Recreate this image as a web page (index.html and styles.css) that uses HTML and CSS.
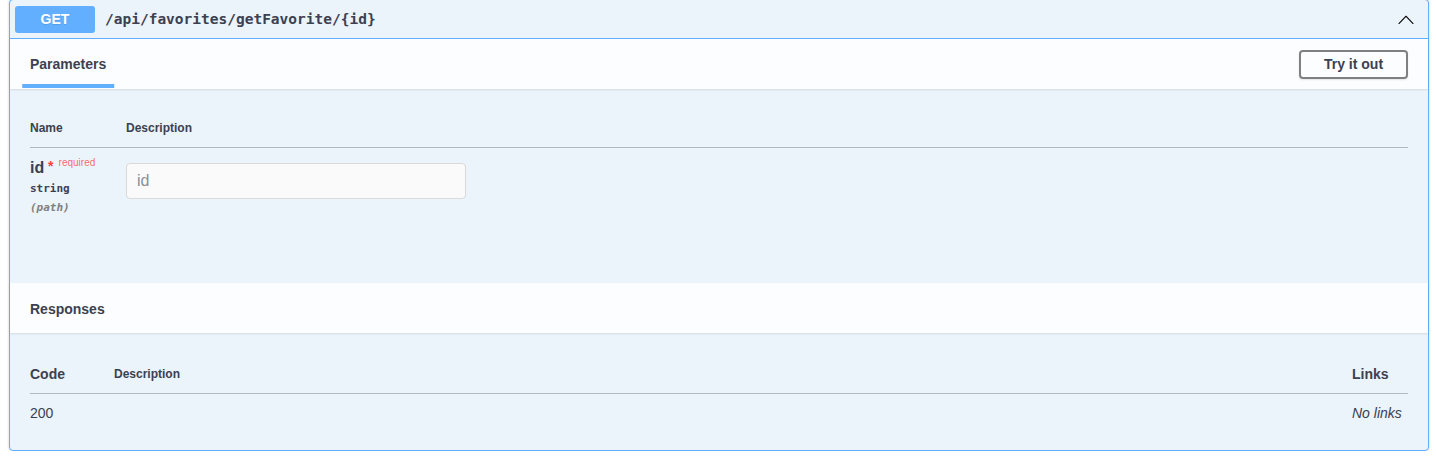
FILE: index.html
```html
<!DOCTYPE html>
<html>
<head>
<meta charset="utf-8">
<link rel="stylesheet" href="styles.css">
</head>
<body>
<div class="wrap">
  <div class="opblock">
    <div class="summary">
      <span class="method">GET</span>
      <span class="path">/api/favorites/getFavorite/{id}</span>
      <svg class="arrow" width="20" height="20" viewBox="0 0 20 20"><path d="M17.418 14.908c-.109.115-.23.115-.365.115-.134 0-.268 0-.379-.115L10 7.988l-6.674 6.92c-.208.2-.558.2-.767 0-.208-.2-.208-.555 0-.755l7.068-7.3a.513.513 0 0 1 .747 0l7.044 7.3c.209.2.209.555 0 .755z" fill="#000"/></svg>
    </div>
    <div class="section-header">
      <div class="tab"><h4><span class="tab-label">Parameters</span></h4></div>
      <button class="try">Try it out</button>
    </div>
    <div class="params">
      <table class="ptable">
        <thead>
          <tr><th class="col-name">Name</th><th>Description</th></tr>
        </thead>
        <tbody>
          <tr>
            <td class="col-name">
              <div class="pname">id<span class="star">&nbsp;*</span><span class="req">required</span></div>
              <div class="ptype">string</div>
              <div class="pin">(path)</div>
            </td>
            <td><input class="pinput" type="text" placeholder="id"></td>
          </tr>
        </tbody>
      </table>
    </div>
    <div class="section-header resp-header">
      <h4 class="resp-title">Responses</h4>
    </div>
    <div class="responses">
      <table class="rtable">
        <thead>
          <tr><th class="rcode">Code</th><th class="rdesc">Description</th><th class="rlinks">Links</th></tr>
        </thead>
        <tbody>
          <tr><td class="rcode-v">200</td><td></td><td class="nolinks">No links</td></tr>
        </tbody>
      </table>
    </div>
  </div>
</div>
</body>
</html>
```
FILE: styles.css
```css
html, body {
  margin: 0;
  padding: 0;
  background: #ffffff;
  font-family: "Liberation Sans", Arial, sans-serif;
  color: #3b4151;
}
.wrap {
  padding: 0 7px 0 9px;
}
.opblock {
  margin-top: -1px;
  border: 1px solid #61affe;
  border-radius: 4px;
  background: #ebf3fb;
  box-shadow: 0 0 3px rgba(0,0,0,.19);
  height: 452px;
  box-sizing: border-box;
}
.summary {
  display: flex;
  align-items: center;
  padding: 5px;
  height: 28px;
  box-sizing: content-box;
  border-bottom: 1px solid #61affe;
}
.method {
  background: #61affe;
  color: #fff;
  border-radius: 3px;
  width: 80px;
  height: 27px;
  display: flex;
  align-items: center;
  justify-content: center;
  font-weight: 700;
  font-size: 14px;
  text-shadow: 0 1px 0 rgba(0,0,0,.1);
}
.path {
  padding: 0 10px;
  font-family: "DejaVu Sans Mono", monospace;
  font-weight: 700;
  font-size: 14.5px;
  color: #3b4151;
  flex: 1;
}
.arrow {
  margin-right: 7px;
  width: 20px;
  height: 20px;
}
.section-header {
  display: flex;
  align-items: center;
  justify-content: space-between;
  height: 50px;
  padding: 0 20px;
  background: rgba(255,255,255,.8);
  box-shadow: 0 1px 2px rgba(0,0,0,.1);
}
.tab h4 {
  margin: 0;
  font-size: 14px;
  font-weight: 700;
}
.tab-label {
  position: relative;
}
.tab-label::after {
  content: "";
  position: absolute;
  left: 50%;
  bottom: -16px;
  width: 120%;
  height: 4px;
  transform: translateX(-50%);
  background: #61affe;
}
.try {
  font-family: "Liberation Sans", Arial, sans-serif;
  font-size: 14px;
  font-weight: 700;
  color: #3b4151;
  background: transparent;
  border: 2px solid #808080;
  border-radius: 4px;
  width: 109px;
  height: 29px;
  box-shadow: 0 1px 2px rgba(0,0,0,.1);
  margin-right: 0;
}
.params {
  height: 194px;
  padding: 20px 20px 0 20px;
  box-sizing: border-box;
}
.ptable, .rtable {
  width: 100%;
  border-collapse: collapse;
}
.ptable th {
  text-align: left;
  font-size: 12px;
  font-weight: 700;
  padding: 12px 0 12px 0;
  border-bottom: 1px solid #b3b8c0;
}
.ptable th.col-name, .ptable td.col-name {
  width: 96px;
}
.ptable td {
  vertical-align: top;
  padding: 10px 0 0 0;
}
.pname {
  font-size: 16px;
  font-weight: 700;
  line-height: 20px;
}
.star {
  color: #f93e3e;
  font-size: 14px;
  position: relative;
  top: -2px;
}
.req {
  font-size: 10px;
  font-weight: 400;
  color: rgba(255,0,0,.6);
  position: relative;
  top: -7px;
  margin-left: 5px;
}
.ptype {
  font-family: "DejaVu Sans Mono", monospace;
  font-size: 11px;
  font-weight: 600;
  padding-top: 2px;
}
.pin {
  font-family: "DejaVu Sans Mono", monospace;
  font-size: 11px;
  font-style: italic;
  font-weight: 600;
  color: gray;
  padding-top: 6px;
}
.pinput {
  width: 340px;
  height: 36px;
  box-sizing: border-box;
  margin-top: 5px;
  border: 1px solid #d9d9d9;
  border-radius: 4px;
  background: #fafafa;
  padding: 8px 10px;
  font-family: "Liberation Sans", Arial, sans-serif;
  font-size: 16px;
  color: #3b4151;
  outline: none;
}
.pinput::placeholder {
  color: #8a8f9a;
}
.resp-title {
  margin: 2px 0 0 0;
  font-size: 14px;
  font-weight: 700;
}
.responses {
  padding: 21px 20px 0 20px;
}
.rtable th {
  text-align: left;
  font-weight: 700;
  padding: 12px 0 11px 0;
  border-bottom: 1px solid #b3b8c0;
}
.rcode {
  font-size: 14px;
  width: 84px;
}
.rdesc {
  font-size: 12px;
}
.rlinks {
  font-size: 14px;
  width: 56px;
}
.rtable td {
  padding: 11px 0 0 0;
  font-size: 14px;
}
.nolinks {
  font-style: italic;
  font-size: 14px;
}
```
